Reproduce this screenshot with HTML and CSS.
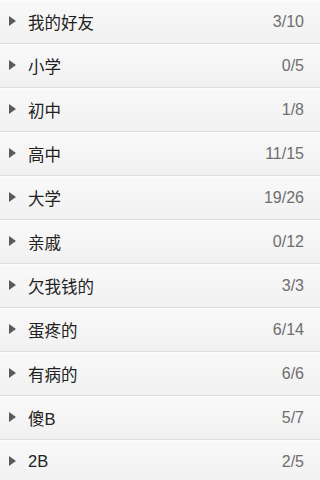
FILE: index.html
```html
<!DOCTYPE html>
<html lang="zh">
<head>
<meta charset="utf-8">
<link rel="stylesheet" href="styles.css">
</head>
<body>
<ul class="groups">
  <li class="group"><span class="arrow"></span><span class="name">我的好友</span><span class="count">3/10</span></li>
  <li class="group"><span class="arrow"></span><span class="name">小学</span><span class="count">0/5</span></li>
  <li class="group"><span class="arrow"></span><span class="name">初中</span><span class="count">1/8</span></li>
  <li class="group"><span class="arrow"></span><span class="name">高中</span><span class="count">11/15</span></li>
  <li class="group"><span class="arrow"></span><span class="name">大学</span><span class="count">19/26</span></li>
  <li class="group"><span class="arrow"></span><span class="name">亲戚</span><span class="count">0/12</span></li>
  <li class="group"><span class="arrow"></span><span class="name">欠我钱的</span><span class="count">3/3</span></li>
  <li class="group"><span class="arrow"></span><span class="name">蛋疼的</span><span class="count">6/14</span></li>
  <li class="group"><span class="arrow"></span><span class="name">有病的</span><span class="count">6/6</span></li>
  <li class="group"><span class="arrow"></span><span class="name">傻B</span><span class="count">5/7</span></li>
  <li class="group"><span class="arrow"></span><span class="name">2B</span><span class="count">2/5</span></li>
</ul>
</body>
</html>
```
FILE: styles.css
```css
html, body {
  margin: 0;
  padding: 0;
  background: #f4f4f4;
}
body {
  font-family: "Liberation Sans", "Noto Sans CJK SC", sans-serif;
  overflow: hidden;
  height: 480px;
}
.groups {
  list-style: none;
  margin: 0;
  padding: 0;
}
.group {
  display: flex;
  align-items: center;
  height: 43px;
  padding: 0 16px 0 9px;
  background: linear-gradient(#f9f9f9, #f1f1f1);
  border-bottom: 1px solid #dedede;
  box-shadow: inset 0 1px 0 #fdfdfd;
}
.arrow {
  width: 0;
  height: 0;
  border-top: 5px solid transparent;
  border-bottom: 5px solid transparent;
  border-left: 7px solid #5a5a5a;
  margin-right: 12px;
  margin-top: -1px;
}
.name {
  flex: 1;
  font-size: 16.5px;
  color: #222;
}
.count {
  font-size: 16px;
  color: #6e6e6e;
}
```
